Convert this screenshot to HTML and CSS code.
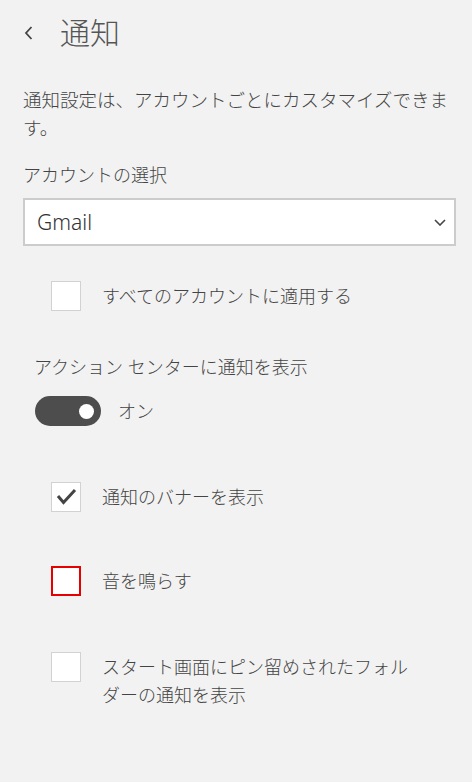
FILE: index.html
```html
<!DOCTYPE html>
<html lang="ja">
<head>
    <meta charset="UTF-8">
    <meta name="viewport" content="width=device-width, initial-scale=1.0">
    <title>通知</title>
    <link rel="stylesheet" href="styles.css">
</head>
<body>
    <div class="page">
        <header class="header">
            <svg class="back" width="12" height="16" viewBox="0 0 12 16">
                <polyline points="8.5,2 3,8 8.5,14" fill="none" stroke="#444" stroke-width="1.8"/>
            </svg>
            <h1>通知</h1>
        </header>

        <p class="desc">通知設定は、アカウントごとにカスタマイズできます。</p>

        <p class="label">アカウントの選択</p>
        <div class="select">
            <span>Gmail</span>
            <svg width="12" height="7" viewBox="0 0 12 7">
                <polyline points="1,1 6,6 11,1" fill="none" stroke="#444" stroke-width="1.6"/>
            </svg>
        </div>

        <label class="check first">
            <span class="box"></span>
            <span class="text">すべてのアカウントに適用する</span>
        </label>

        <p class="label section">アクション センターに通知を表示</p>
        <div class="toggle-row">
            <span class="toggle"><span class="knob"></span></span>
            <span class="text">オン</span>
        </div>

        <label class="check banner">
            <span class="box">
                <svg width="28" height="28" viewBox="0 0 28 28">
                    <polyline points="6,13 11.5,19.5 23,7" fill="none" stroke="#444" stroke-width="3"/>
                </svg>
            </span>
            <span class="text">通知のバナーを表示</span>
        </label>

        <label class="check sound">
            <span class="box focus"></span>
            <span class="text">音を鳴らす</span>
        </label>

        <label class="check pinned">
            <span class="box"></span>
            <span class="text">スタート画面にピン留めされたフォルダーの通知を表示</span>
        </label>
    </div>
</body>
</html>
```

FILE: styles.css
```css
* {
    box-sizing: border-box;
}
html,
body {
    margin: 0;
    padding: 0;
    background: #f2f2f2;
    color: #444;
    font-family: "Noto Sans", "Noto Sans CJK JP", sans-serif;
    font-weight: 300;
}
p {
    margin: 0;
}
.page {
    width: 472px;
    padding: 0 16px 0 23px;
}

/* header */
.header {
    display: flex;
    align-items: center;
    height: 40px;
    margin-top: 13px;
}
.back {
    display: block;
}
.header h1 {
    margin: 0 0 0 25px;
    font-size: 30px;
    font-weight: 300;
    line-height: 40px;
    color: #555;
}

.desc {
    margin-top: 33px;
    font-size: 18.5px;
    line-height: 28px;
}
.label {
    margin-top: 19px;
    font-size: 18px;
    line-height: 28px;
}

/* account select */
.select {
    display: flex;
    align-items: center;
    justify-content: space-between;
    height: 48px;
    margin-top: 9px;
    padding: 0 8px 0 12px;
    background: #fff;
    border: 2px solid #cccccc;
    font-size: 21px;
    color: #333;
}

/* checkboxes */
.check {
    display: flex;
    align-items: center;
    padding-left: 28px;
}
.check .box {
    flex: none;
    width: 30px;
    height: 30px;
    background: #fff;
    border: 1px solid #d2d2d2;
    display: flex;
    align-items: center;
    justify-content: center;
}
.check .box.focus {
    border: 2px solid #e60000;
}
.check .text,
.toggle-row .text {
    margin-left: 21px;
    font-size: 18px;
    line-height: 28px;
}
.check.first {
    margin-top: 35px;
}
.check.banner {
    margin-top: 56px;
}
.check.sound {
    margin-top: 54px;
}
.check.pinned {
    margin-top: 56px;
    align-items: flex-start;
}
.check.pinned .text {
    width: 320px;
    margin-top: 1px;
}

/* toggle */
.label.section {
    margin-top: 42px;
    padding-left: 11px;
}
.toggle-row {
    display: flex;
    align-items: center;
    margin-top: 15px;
    padding-left: 12px;
}
.toggle {
    width: 66px;
    height: 30px;
    border-radius: 15px;
    background: #4d4d4d;
    display: flex;
    align-items: center;
    justify-content: flex-end;
    padding-right: 7px;
}
.knob {
    width: 15px;
    height: 15px;
    border-radius: 50%;
    background: #fff;
}
.toggle-row .text {
    margin-left: 17px;
}
```
